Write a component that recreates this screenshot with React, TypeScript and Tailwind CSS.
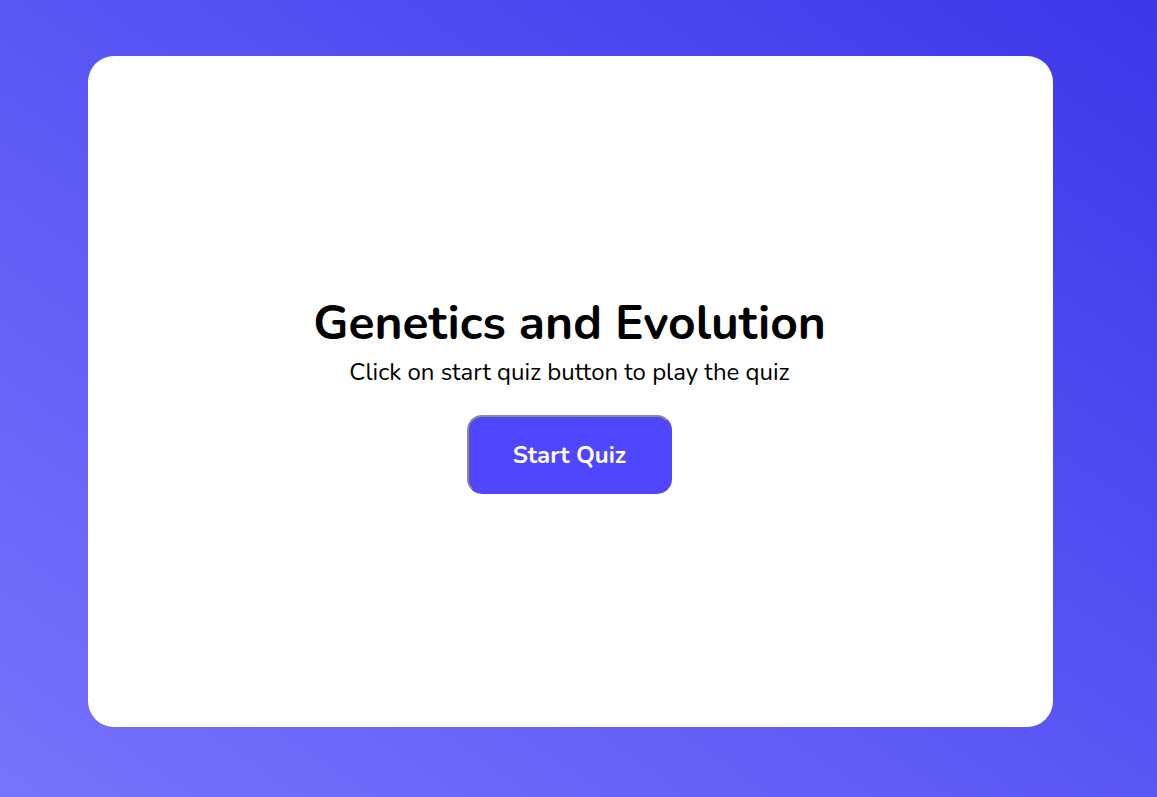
import React from 'react';

type Props = {
    title?: string;
    subtitle?: string;
    onStart?: () => void;
};

const QuizIntro: React.FC<Props> = ({
    title = 'Genetics and Evolution',
    subtitle = 'Click on start quiz button to play the quiz',
    onStart,
}) => {
    return (
        <section className="flex flex-1 flex-col items-center justify-center rounded-[26px] bg-white pt-[6px] pr-[2px]">
            <h1 className="text-[48px] font-bold leading-[56px] text-black">{title}</h1>
            <p className="mt-[6px] text-[24px] leading-[30px] text-black">{subtitle}</p>

            {/* кнопка старта */}
            <button
                onClick={onStart}
                className="mt-[28px] h-[79px] w-[205px] rounded-[15px] border-2 border-t-[#8c8c8c] border-l-[#8c8c8c] border-r-[#5046fe] border-b-[#5046fe] bg-[#5046fe] text-[24px] font-bold text-white"
            >
                Start Quiz
            </button>
        </section>
    );
};

export default function App() {
    return (
        <div
            className="flex h-[797px] w-full bg-[linear-gradient(to_top_right,#7873fb,#5a56f4_50%,#3c37e9)] pt-[56px] pb-[70px] pl-[88px] pr-[104px] font-['Nunito','Lato','Open_Sans',sans-serif]"
        >
            <QuizIntro />
        </div>
    );
}
